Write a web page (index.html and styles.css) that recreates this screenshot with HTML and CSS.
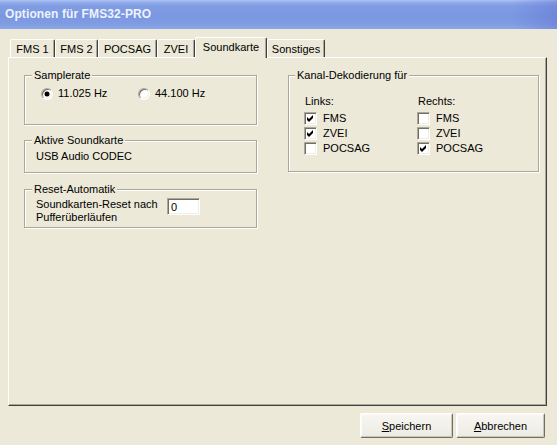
FILE: index.html
```html
<!DOCTYPE html>
<html lang="de">
<head>
<meta charset="utf-8">
<title>Optionen für FMS32-PRO</title>
<link rel="stylesheet" href="styles.css">
</head>
<body>
<div class="window">
  <div class="titlebar"><span class="title">Optionen für FMS32-PRO</span></div>

  <div class="tabstrip">
    <div class="tab t-fms1">FMS 1</div>
    <div class="tab t-fms2">FMS 2</div>
    <div class="tab t-pocsag">POCSAG</div>
    <div class="tab t-zvei">ZVEI</div>
    <div class="tab t-sound active">Soundkarte</div>
    <div class="tab t-sonst">Sonstiges</div>
  </div>

  <div class="panel">
    <div class="columns">
      <div class="leftcol">
        <div class="group g-rate">
          <div class="gtitle">Samplerate</div>
          <div class="radios">
            <div class="opt"><span class="radio on"></span>11.025 Hz</div>
            <div class="opt"><span class="radio"></span>44.100 Hz</div>
          </div>
        </div>

        <div class="group g-card">
          <div class="gtitle">Aktive Soundkarte</div>
          <div class="cardname">USB Audio CODEC</div>
        </div>

        <div class="group g-reset">
          <div class="gtitle">Reset-Automatik</div>
          <div class="resetrow">
            <div class="resetlabel">Soundkarten-Reset nach<br>Pufferüberläufen</div>
            <div class="field">0</div>
          </div>
        </div>
      </div>

      <div class="group g-kanal">
        <div class="gtitle">Kanal-Dekodierung für</div>
        <div class="channels">
          <div class="chcol">
            <div class="chhead">Links:</div>
            <div class="chk"><span class="box on"><svg viewBox="0 0 11 11"><polygon points="2,4 4,6 8,2 8,5 4,9 2,7"/></svg></span>FMS</div>
            <div class="chk"><span class="box on"><svg viewBox="0 0 11 11"><polygon points="2,4 4,6 8,2 8,5 4,9 2,7"/></svg></span>ZVEI</div>
            <div class="chk"><span class="box"></span>POCSAG</div>
          </div>
          <div class="chcol">
            <div class="chhead">Rechts:</div>
            <div class="chk"><span class="box"></span>FMS</div>
            <div class="chk"><span class="box"></span>ZVEI</div>
            <div class="chk"><span class="box on"><svg viewBox="0 0 11 11"><polygon points="2,4 4,6 8,2 8,5 4,9 2,7"/></svg></span>POCSAG</div>
          </div>
        </div>
      </div>
    </div>
  </div>

  <div class="buttons">
    <div class="btn b-save"><u>S</u>peichern</div>
    <div class="btn b-cancel"><u>A</u>bbrechen</div>
  </div>
</div>
</body>
</html>
```

FILE: styles.css
```css
* { box-sizing: border-box; }

html, body {
  margin: 0;
  padding: 0;
  background: #ece9d8;
}

.window {
  width: 557px;
  height: 445px;
  background: #ece9d8;
  font-family: "Liberation Sans", Arial, sans-serif;
  font-size: 11px;
  line-height: 13px;
  color: #000;
  overflow: hidden;
}

/* inactive caption bar */
.titlebar {
  height: 29px;
  display: flex;
  align-items: center;
  padding-left: 5px;
  background:
    linear-gradient(to right, rgba(90, 100, 205, 0) 92%, rgba(90, 100, 205, 0.35) 100%),
    linear-gradient(to bottom, #b2c6f2 0px, #94aeec 2px, #809de4 6px, #7a97e1 16px, #7f9ce3 24px, #8aa6e8 28px, #8aa6e8 29px);
}

.title {
  font-weight: bold;
  font-size: 12px;
  letter-spacing: 0.1px;
  color: #eef2fb;
}

/* tab strip */
.tabstrip {
  display: flex;
  align-items: flex-end;
  height: 20px;
  margin: 8px 0 0 10px;
}

.tab {
  height: 18px;
  display: flex;
  align-items: center;
  justify-content: center;
  padding-top: 1px;
  border-top: 1px solid #fff;
  border-left: 1px solid #fff;
  border-right: 1px solid #404040;
  border-radius: 2px 2px 0 0;
  box-shadow: inset -1px 0 #aca899;
}

.tab.active {
  height: 21px;
  margin-bottom: -1px;
  padding-top: 0;
  padding-bottom: 2px;
  background: #ece9d8;
  position: relative;
  z-index: 1;
}

.t-fms1 { width: 45px; }
.t-fms2 { width: 43px; }
.t-pocsag { width: 59px; }
.t-zvei { width: 38px; }
.t-sound { width: 72px; }
.t-sonst { width: 58px; }

/* tab page */
.panel {
  margin-left: 8px;
  width: 539px;
  height: 349px;
  border-top: 1px solid #fff;
  border-left: 1px solid #fff;
  border-right: 1px solid #404040;
  border-bottom: 1px solid #404040;
  box-shadow: inset -1px -1px #aca899;
  padding: 17px 0 0 15px;
}

.columns {
  display: grid;
  grid-template-columns: 233px 251px;
  column-gap: 31px;
  align-items: start;
}

.leftcol {
  display: flex;
  flex-direction: column;
}

/* etched group frame */
.group {
  display: flex;
  flex-direction: column;
  align-items: flex-start;
  border: 1px solid #aca899;
  box-shadow: inset 1px 1px #fff, 1px 1px #fff;
}

.gtitle {
  margin: -7px 0 0 7px;
  padding: 0 2px;
  background: #ece9d8;
  height: 13px;
  position: relative;
}

.g-rate { height: 50px; }
.g-card { height: 33px; margin-top: 15px; }
.g-reset { height: 39px; margin-top: 16px; }
.g-kanal { height: 97px; }
.g-kanal .gtitle { margin-left: 6px; }

.radios {
  display: flex;
  margin: 5px 0 0 16px;
}

.opt {
  display: flex;
  align-items: center;
  gap: 5px;
  height: 13px;
}

.opt:first-child { width: 97px; }

.radio {
  width: 12px;
  height: 12px;
  border-radius: 50%;
  background: #fff;
  border: 1px solid;
  border-color: #aca899 #fff #fff #aca899;
  box-shadow: inset 1px 1px #716f64, inset -1px -1px #f1efe2;
  display: flex;
  align-items: center;
  justify-content: center;
}

.radio.on::after {
  content: "";
  width: 4px;
  height: 4px;
  border-radius: 50%;
  background: #000;
  box-shadow: 0 0 0 0.5px #000;
}

.cardname {
  margin: 3px 0 0 11px;
}

.resetrow {
  display: flex;
  align-items: flex-start;
  margin: 2px 0 0 11px;
}

.resetlabel { width: 131px; }

.field {
  width: 33px;
  height: 17px;
  background: #fff;
  border: 1px solid;
  border-color: #aca899 #fff #fff #aca899;
  box-shadow: inset 1px 1px #716f64, inset -1px -1px #f1efe2;
  padding: 2px 0 0 3px;
}

/* channel check boxes */
.channels {
  display: flex;
  margin: 13px 0 0 15px;
}

.chcol {
  width: 113px;
  display: flex;
  flex-direction: column;
}

.chhead {
  padding-left: 1px;
  margin-bottom: 3px;
}

.chk {
  display: flex;
  align-items: center;
  gap: 6px;
  height: 15px;
}

.box {
  width: 13px;
  height: 13px;
  background: #fff;
  border: 1px solid;
  border-color: #aca899 #fff #fff #aca899;
  box-shadow: inset 1px 1px #716f64, inset -1px -1px #f1efe2;
  display: flex;
}

.box svg {
  width: 11px;
  height: 11px;
}

.box polygon { fill: #000; }

/* dialog buttons */
.buttons {
  display: flex;
  justify-content: flex-end;
  gap: 3px;
  margin-top: 7px;
  padding-right: 12px;
}

.btn {
  height: 25px;
  display: flex;
  align-items: center;
  justify-content: center;
  background: linear-gradient(#f7f6f1, #ecebe3);
  border: 1px solid;
  border-color: #fff #716f64 #716f64 #fff;
  border-radius: 2px;
  box-shadow: inset -1px -1px #c9c6b8, inset 1px 1px #fbfaf6;
  padding-top: 1px;
}

.b-save { width: 93px; }
.b-cancel { width: 89px; }
```
